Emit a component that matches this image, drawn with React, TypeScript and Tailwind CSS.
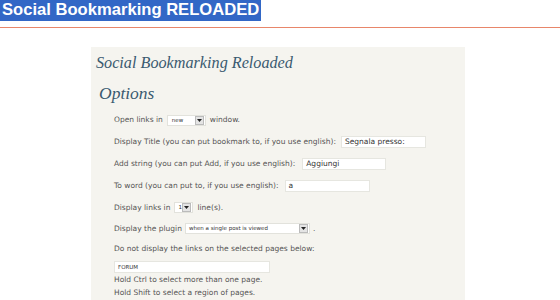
import React from "react";

const Arrow = () => (
  <span className="ml-auto mr-[1px] flex h-[9px] w-[9px] items-center justify-center border border-[#bbb] bg-[#e4e4e4]">
    <svg width="5" height="3" viewBox="0 0 5 3"><path d="M0 0h5L2.5 3z" fill="#222" /></svg>
  </span>
);

const Select = ({ w, text, pad = "pl-[4px]" }: { w: string; text: string; pad?: string }) => (
  <span className={`flex h-[11px] items-center border border-[#e2e2dc] bg-white ${w} ${pad}`}>
    <span className="text-[5.5px] text-[#333]" style={{ fontFamily: "'DejaVu Sans', sans-serif" }}>{text}</span>
    <Arrow />
  </span>
);

const Input = ({ w, text }: { w: string; text: string }) => (
  <span className={`flex h-[12px] items-center border border-[#e6e6e0] bg-white pl-[3px] text-[7.5px] text-[#333] ${w}`}>{text}</span>
);

export default function App() {
  return (
    <div className="h-[300px] w-[560px] overflow-hidden bg-white">
      <div className="flex h-[21px] w-[261px] items-center bg-[#3267c6] pl-[2px] text-[16.6px] font-bold leading-none text-white" style={{ fontFamily: "'Liberation Sans', Arial, sans-serif" }}>
        Social Bookmarking RELOADED
      </div>
      <div className="mt-[6px] h-px w-full bg-[#e8866a]" />
      <div className="ml-[91px] mt-[19px] h-[260px] w-[374px] bg-[#f5f4ef] text-[#555]" style={{ fontFamily: "'DejaVu Sans', Verdana, sans-serif" }}>
        <div className="pl-[5px] pt-[6px] text-[16.2px] italic leading-[20px] text-[#3a5a70]" style={{ fontFamily: "'Liberation Serif', Georgia, serif" }}>
          Social Bookmarking Reloaded
        </div>
        <div className="pl-[8px] pt-[9px] text-[17.5px] italic leading-[22px] text-[#3a5a70]" style={{ fontFamily: "'Liberation Serif', Georgia, serif" }}>
          Options
        </div>
        <div className="pl-[23px] pt-[5px] text-[7.5px]">
          <div className="flex h-[22px] items-center gap-[4px]">
            <span>Open links in</span>
            <Select w="w-[39px]" text="new" />
            <span>window.</span>
          </div>
          <div className="flex h-[22px] items-center gap-[5px]">
            <span>Display Title (you can put bookmark to, if you use english):</span>
            <Input w="w-[85px]" text="Segnala presso:" />
          </div>
          <div className="flex h-[22px] items-center gap-[7px]">
            <span>Add string (you can put Add, if you use english):</span>
            <Input w="w-[84px]" text="Aggiungi" />
          </div>
          <div className="flex h-[22px] items-center gap-[6px]">
            <span>To word (you can put to, if you use english):</span>
            <Input w="w-[85px]" text="a" />
          </div>
          <div className="flex h-[21px] items-center gap-[4px]">
            <span>Display links in</span>
            <Select w="w-[19px]" text="1" pad="pl-[3px]" />
            <span>line(s).</span>
          </div>
          <div className="flex h-[21px] items-center gap-[3px]">
            <span>Display the plugin</span>
            <Select w="w-[125px]" text="when a single post is viewed" pad="pl-[3px]" />
            <span>.</span>
          </div>
          <div className="flex h-[20px] items-center">
            <span>Do not display the links on the selected pages below:</span>
          </div>
          <div className="mt-[2px] flex h-[12px] w-[156px] items-center border border-[#e6e6e0] bg-white pl-[3px] text-[5.5px] text-[#333]">FORUM</div>
          <div className="leading-[13px]">Hold Ctrl to select more than one page.</div>
          <div className="leading-[13px]">Hold Shift to select a region of pages.</div>
        </div>
      </div>
    </div>
  );
}
